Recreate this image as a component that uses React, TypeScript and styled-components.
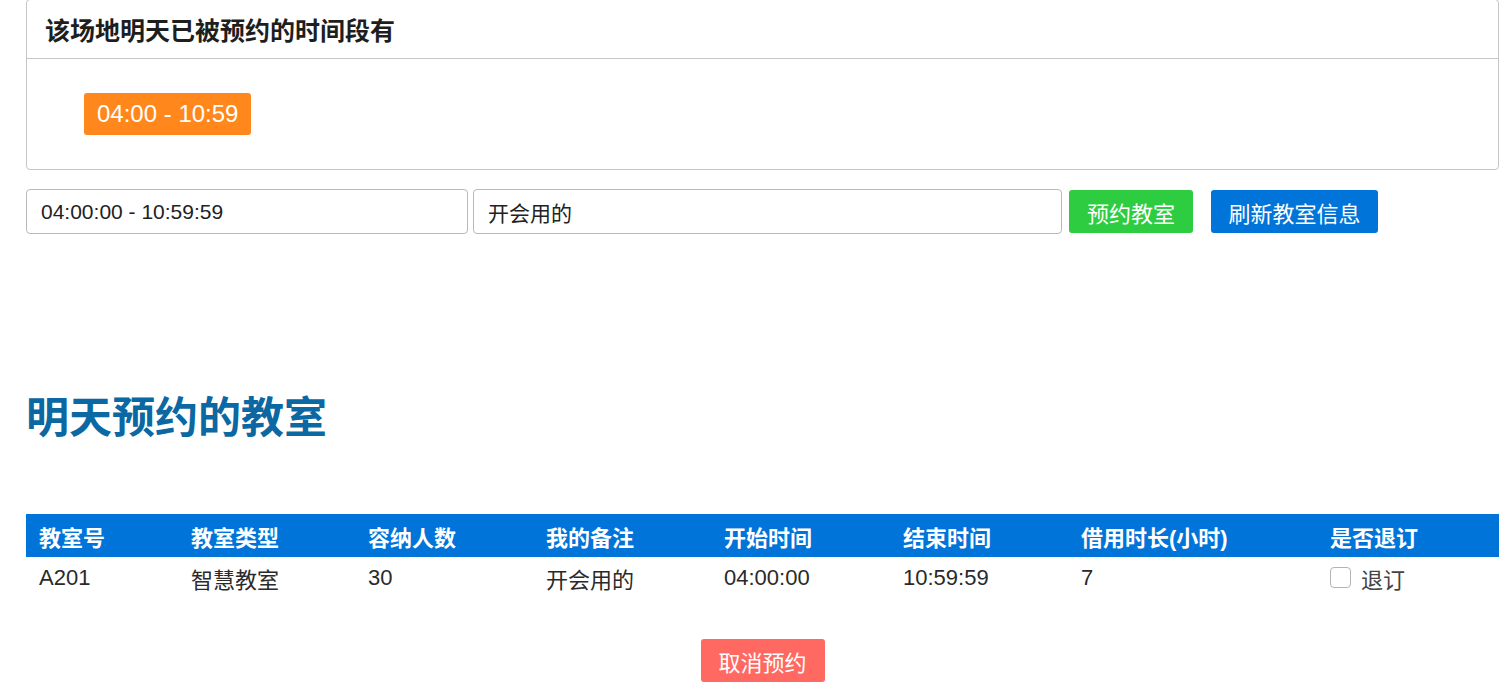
import React from 'react';
import styled, { createGlobalStyle } from 'styled-components';

const GlobalStyle = createGlobalStyle`
  body{
    margin: 0;
    background: #ffffff;
    color: #333333;
    font-family: "Liberation Sans", "Noto Sans CJK SC", sans-serif;
  }
  *{ box-sizing: border-box; }
`;

const Page = styled.div`
  padding: 0 12px 0 26px;
`;

const BookedPanel = styled.section`
  margin-top: -1px;
  border: 1px solid #c6c6c6;
  border-radius: 4px;
  >header{
    height: 59px;
    display: flex;
    align-items: center;
    padding: 0 18px;
    border-bottom: 1px solid #c6c6c6;
    font-size: 25px;
    font-weight: bold;
    color: #1e1e1e;
  }
  >div{
    padding: 34px 57px;
    display: flex;
    gap: 12px;
  }
`;

const SlotBadge = styled.span`
  display: inline-flex;
  align-items: center;
  height: 42px;
  padding: 0 13px;
  background: #ff871c;
  color: #ffffff;
  font-size: 24px;
  border-radius: 3px;
`;

const FormRow = styled.div`
  display: flex;
  align-items: center;
  margin-top: 19px;
`;

const TextInput = styled.input<{ $w: number }>`
  width: ${p => p.$w}px;
  height: 45px;
  margin-right: 5px;
  padding: 0 14px;
  border: 1px solid #b9b9b9;
  border-radius: 4px;
  font-family: inherit;
  font-size: 21px;
  color: #222222;
  outline: none;
`;

const ActionButton = styled.button<{ $bg: string; $w: number; $gap?: number }>`
  width: ${p => p.$w}px;
  height: 43px;
  margin-left: ${p => p.$gap ?? 0}px;
  border: none;
  border-radius: 3px;
  background: ${p => p.$bg};
  color: #ffffff;
  font-family: inherit;
  font-size: 22px;
  cursor: pointer;
`;

const Title = styled.h2`
  margin: 158px 0 0;
  font-size: 43px;
  line-height: 52px;
  font-weight: bold;
  color: #0b68a2;
`;

const BookingTable = styled.table`
  width: 100%;
  margin-top: 70px;
  border-collapse: collapse;
  table-layout: fixed;
  font-size: 22px;
  th{
    height: 43px;
    padding: 0 13px;
    text-align: left;
    background: #0074d9;
    color: #ffffff;
    font-weight: bold;
    white-space: nowrap;
  }
  td{
    height: 42px;
    padding: 0 13px;
    color: #2a2a2a;
    white-space: nowrap;
  }
`;

const Col = styled.col<{ $w: number }>`
  width: ${p => p.$w}px;
`;

const CheckLabel = styled.label`
  display: inline-flex;
  align-items: center;
  gap: 10px;
  color: #444444;
  >input{
    appearance: none;
    width: 21px;
    height: 21px;
    margin: 0;
    border: 1px solid #b4b4b4;
    border-radius: 4px;
    background: #ffffff;
  }
`;

const Footer = styled.div`
  display: flex;
  justify-content: center;
  margin-top: 40px;
  padding-bottom: 20px;
`;

const columns = [
  { title: '教室号', w: 152 },
  { title: '教室类型', w: 177 },
  { title: '容纳人数', w: 178 },
  { title: '我的备注', w: 178 },
  { title: '开始时间', w: 179 },
  { title: '结束时间', w: 178 },
  { title: '借用时长(小时)', w: 249 },
  { title: '是否退订', w: 182 },
];

function App() {
  return (
    <Page>
      <GlobalStyle/>
      <BookedPanel>
        <header>该场地明天已被预约的时间段有</header>
        <div>
          <SlotBadge>04:00 - 10:59</SlotBadge>
        </div>
      </BookedPanel>
      <FormRow>
        <TextInput $w={442} defaultValue="04:00:00 - 10:59:59"/>
        <TextInput $w={589} defaultValue="开会用的"/>
        <ActionButton $bg="#2ecc40" $w={124} $gap={2}>预约教室</ActionButton>
        <ActionButton $bg="#0074d9" $w={167} $gap={18}>刷新教室信息</ActionButton>
      </FormRow>
      <Title>明天预约的教室</Title>
      <BookingTable>
        <colgroup>
          {columns.map(c => <Col key={c.title} $w={c.w}/>)}
        </colgroup>
        <thead>
          <tr>
            {columns.map(c => <th key={c.title}>{c.title}</th>)}
          </tr>
        </thead>
        <tbody>
          <tr>
            <td>A201</td>
            <td>智慧教室</td>
            <td>30</td>
            <td>开会用的</td>
            <td>04:00:00</td>
            <td>10:59:59</td>
            <td>7</td>
            <td>
              <CheckLabel>
                <input type="checkbox"/>
                退订
              </CheckLabel>
            </td>
          </tr>
        </tbody>
      </BookingTable>
      <Footer>
        <ActionButton $bg="#ff6962" $w={124}>取消预约</ActionButton>
      </Footer>
    </Page>
  );
}

export default App;
